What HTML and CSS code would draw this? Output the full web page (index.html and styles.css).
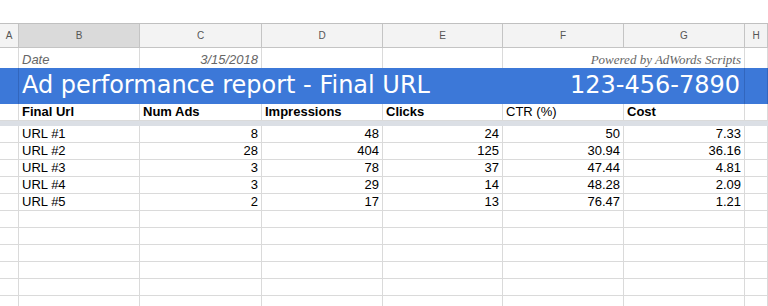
FILE: index.html
```html
<!DOCTYPE html>
<html>
<head>
<meta charset="utf-8">
<link rel="stylesheet" href="styles.css">
</head>
<body>
<div class="sheet">
  <div class="row colhead">
    <div class="ch">A</div>
    <div class="ch sel">B</div>
    <div class="ch">C</div>
    <div class="ch">D</div>
    <div class="ch">E</div>
    <div class="ch">F</div>
    <div class="ch">G</div>
    <div class="ch">H</div>
  </div>
  <div class="row daterow">
    <div class="c"></div>
    <div class="c it">Date</div>
    <div class="c it r">3/15/2018</div>
    <div class="c"></div>
    <div class="c"></div>
    <div class="c span2 r powered">Powered by AdWords Scripts</div>
    <div class="c"></div>
  </div>
  <div class="row titlerow">
    <div class="c"></div>
    <div class="c span4 title">Ad performance report - Final URL</div>
    <div class="c span2 r phone">123-456-7890</div>
    <div class="c"></div>
  </div>
  <div class="row headrow">
    <div class="c"></div>
    <div class="c b">Final Url</div>
    <div class="c b">Num Ads</div>
    <div class="c b">Impressions</div>
    <div class="c b">Clicks</div>
    <div class="c">CTR (%)</div>
    <div class="c b">Cost</div>
    <div class="c"></div>
  </div>
  <div class="freeze"></div>
  <div class="row data">
    <div class="c"></div><div class="c">URL #1</div><div class="c r">8</div><div class="c r">48</div><div class="c r">24</div><div class="c r">50</div><div class="c r">7.33</div><div class="c"></div>
  </div>
  <div class="row data">
    <div class="c"></div><div class="c">URL #2</div><div class="c r">28</div><div class="c r">404</div><div class="c r">125</div><div class="c r">30.94</div><div class="c r">36.16</div><div class="c"></div>
  </div>
  <div class="row data">
    <div class="c"></div><div class="c">URL #3</div><div class="c r">3</div><div class="c r">78</div><div class="c r">37</div><div class="c r">47.44</div><div class="c r">4.81</div><div class="c"></div>
  </div>
  <div class="row data">
    <div class="c"></div><div class="c">URL #4</div><div class="c r">3</div><div class="c r">29</div><div class="c r">14</div><div class="c r">48.28</div><div class="c r">2.09</div><div class="c"></div>
  </div>
  <div class="row data">
    <div class="c"></div><div class="c">URL #5</div><div class="c r">2</div><div class="c r">17</div><div class="c r">13</div><div class="c r">76.47</div><div class="c r">1.21</div><div class="c"></div>
  </div>
  <div class="row data"><div class="c"></div><div class="c"></div><div class="c"></div><div class="c"></div><div class="c"></div><div class="c"></div><div class="c"></div><div class="c"></div></div>
  <div class="row data"><div class="c"></div><div class="c"></div><div class="c"></div><div class="c"></div><div class="c"></div><div class="c"></div><div class="c"></div><div class="c"></div></div>
  <div class="row data"><div class="c"></div><div class="c"></div><div class="c"></div><div class="c"></div><div class="c"></div><div class="c"></div><div class="c"></div><div class="c"></div></div>
  <div class="row data"><div class="c"></div><div class="c"></div><div class="c"></div><div class="c"></div><div class="c"></div><div class="c"></div><div class="c"></div><div class="c"></div></div>
  <div class="row data"><div class="c"></div><div class="c"></div><div class="c"></div><div class="c"></div><div class="c"></div><div class="c"></div><div class="c"></div><div class="c"></div></div>
  <div class="row data"><div class="c"></div><div class="c"></div><div class="c"></div><div class="c"></div><div class="c"></div><div class="c"></div><div class="c"></div><div class="c"></div></div>
</div>
</body>
</html>
```
FILE: styles.css
```css
* { box-sizing: border-box; }
html, body {
  margin: 0;
  padding: 0;
  background: #fff;
  height: 306px;
  overflow: hidden;
}
.sheet {
  padding-top: 23px;
  font-family: "Liberation Sans", Arial, sans-serif;
  font-size: 13px;
  color: #000;
}
.row {
  display: grid;
  grid-template-columns: 19px 121px 122px 121px 120px 121px 121px 23px;
}
.colhead {
  border-top: 1px solid #c0c0c0;
  height: 25px;
}
.ch {
  background: #f3f3f3;
  border-right: 1px solid #c4c4c4;
  border-bottom: 1px solid #c4c4c4;
  font-size: 10px;
  color: #555;
  text-align: center;
  line-height: 23px;
}
.ch.sel { background: #dadada; }
.c {
  display: flex;
  align-items: flex-end;
  padding: 0 3px;
  line-height: 16px;
  white-space: nowrap;
  border-right: 1px solid #dadada;
  border-bottom: 1px solid #dadada;
}
.c.r { justify-content: flex-end; }
.b { font-weight: bold; }
.span2 { grid-column: span 2; }
.span4 { grid-column: span 4; }

.daterow { height: 20px; }
.daterow .c { border-bottom: none; }
.it { font-style: italic; color: #666; }
.powered {
  font-family: "Liberation Serif", "Times New Roman", serif;
  font-style: italic;
  color: #666;
  font-size: 13px;
  padding-right: 3px;
}

.titlerow {
  height: 36px;
  background: #3c78d8;
}
.titlerow .c {
  border-bottom: none;
  border-right: 1px solid #3266bd;
  color: #fff;
  font-family: "DejaVu Sans", Verdana, sans-serif;
  font-size: 24px;
  line-height: 28px;
  padding-bottom: 5px;
}
.titlerow .title { border-right: none; }
.titlerow .phone { padding-right: 4px; }

.headrow { height: 17px; }
.freeze {
  height: 5px;
  background: #dbdfe5;
}
.data { height: 17px; }
```
